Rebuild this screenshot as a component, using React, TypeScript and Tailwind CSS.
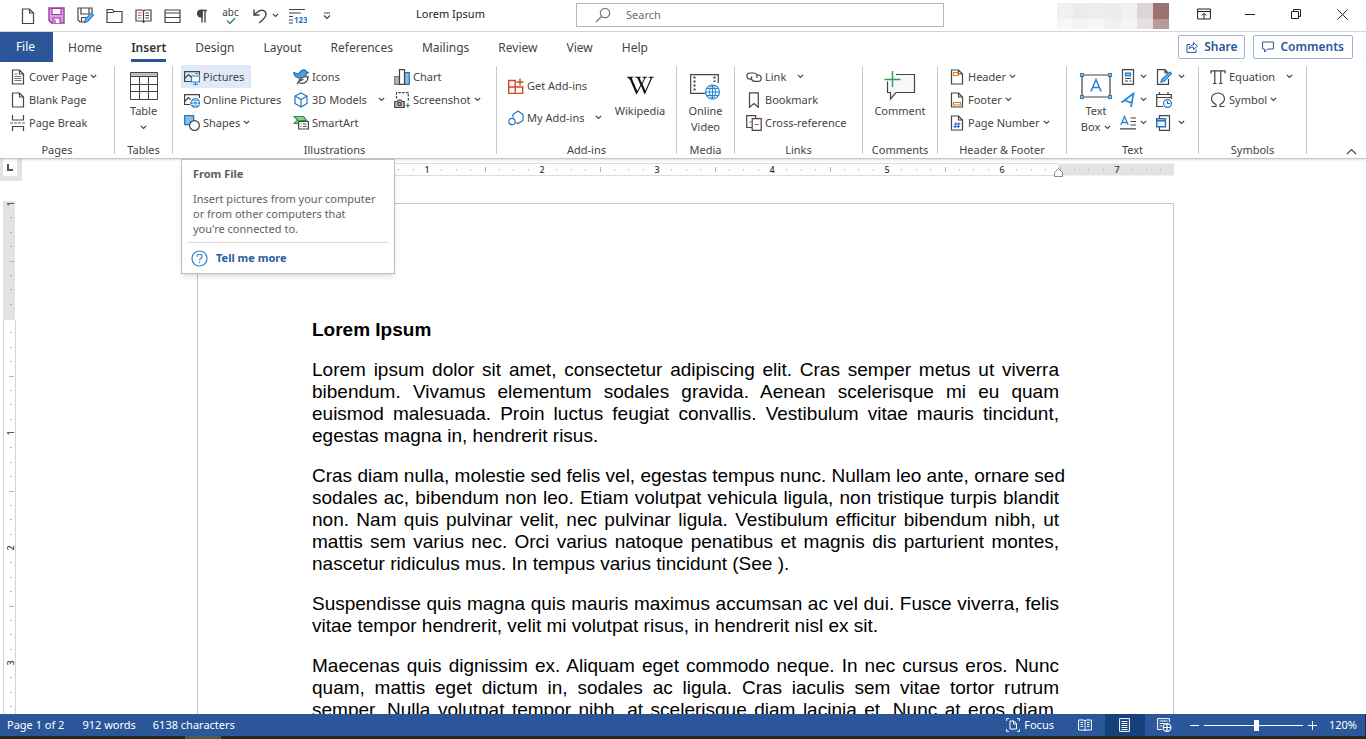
import type { ReactNode } from "react";
import { FaWikipediaW } from "react-icons/fa";

const INK = "#444";
const BLUE = "#2372ba";

function Svg({ w = 16, h = 16, className = "", children }: { w?: number; h?: number; className?: string; children: ReactNode }) {
  return (
    <svg width={w} height={h} viewBox={`0 0 ${w} ${h}`} fill="none" stroke={INK} strokeWidth="1.2" className={`shrink-0 ${className}`} aria-hidden="true">
      {children}
    </svg>
  );
}

function Chevron() {
  return (
    <Svg w={7} h={5}>
      <path d="M.8.8 3.5 3.5 6.2.8" />
    </Svg>
  );
}

const pagePath = "M2.5 1h7l4 4v10h-11zM9.5 1v4h4";

const icons = {
  newDoc: (<Svg><path d="M2.5 1h7l4 4v10.500h-11zM9.500 1v4h4" /></Svg>),
  save: (
    <Svg w={17} h={17}>
      <path d="M1 1h15v15H3.500L1 13.500z" stroke="#a03aa5" fill="#dfa0e2" strokeWidth="1.400" />
      <path d="M4 1.500h9v6H4zM5 16v-5h7v5" stroke="#a03aa5" fill="#fff" />
      <path d="M7 12.500V16" stroke="#a03aa5" />
    </Svg>
  ),
  saveAs: (
    <Svg w={17} h={17}>
      <path d="M8 15H3l-2-2V1h14v5M4 1v6h8V1M4.500 15v-4.500h5" />
      <path d="m7.500 15.500 1-3.500 6-6 2 2-6 6.500z" fill="#7dbdf0" stroke="#1f77c9" />
    </Svg>
  ),
  folder: (<Svg w={17}><path d="M1 14.500V1.500h5.500l1.500 2h8v11zM1 4.500h6l1-1" /></Svg>),
  book: (
    <Svg w={17}>
      <path d="M1 2h6l1.500 1L10 2h6v11h-6l-1.500 1L7 13H1zM8.500 3v12M10.500 5H14M10.500 7.500H14M10.500 10H14" />
      <path d="M3 5h3.500M3 7.500h3.500M3 10h3.500" stroke="#d0643f" />
    </Svg>
  ),
  card: (<Svg w={17}><path d="M1 2h15v12.500H1zM1 5h15M1 9.500h15" /></Svg>),
  undo: (<Svg><path d="M2 1.500v5.500h5.500M2 7l3.500-3C9 1 14 2 14 6.500c0 3-3 5-7 8.500" strokeWidth="1.400" /></Svg>),
  cover: (<Svg><path d={pagePath} /><path d="M4.500 5h3M4.500 7.500h7M4.500 9.500h7M4.500 11.500h7" stroke="#777" /></Svg>),
  blank: (<Svg><path d={pagePath} /></Svg>),
  pageBreak: (
    <Svg>
      <path d="M2.500 0v5h11V0M2.500 16v-4.500h11V16" />
      <path d="M0 8h16" stroke={BLUE} strokeDasharray="3 1" />
    </Svg>
  ),
  table: (
    <Svg w={28} h={28}>
      <path d="M1 1h26v4H1z" fill="#bdbdbd" stroke="none" />
      <path d="M.5.5h27v27H.5zM1 4.500h26M1 12.500h26M1 19.500h26M9.500 5v22M18.500 5v22" strokeWidth="1" />
    </Svg>
  ),
  pictures: (
    <Svg>
      <path d="M7 12.500H.6V2.600h14.800V6M.6 9.500 4.500 5.500 7 8M11.500 4.500h2" />
      <path d="M7.500 7h8v6h-8zM9 15.500h5M11.500 13v2.500" fill="#fff" stroke="#2b84cf" />
    </Svg>
  ),
  online: (
    <Svg>
      <path d="M6 12.500H.6V2.600h14.800V6M.6 9.500 4.500 5.500 6.500 7.500" />
      <circle cx="11.300" cy="11" r="4.500" fill="#4ea5e4" stroke="#1b75bc" strokeWidth="1" />
      <path d="M7 9.500h8.600M7 12.500h8.600M11.300 6.500c-3 3-3 6 0 9 3-3 3-6 0-9" stroke="#fff" strokeWidth=".7" />
    </Svg>
  ),
  shapes: (
    <Svg>
      <path d="M.7.7h9v9h-9z" fill="#83beec" stroke={BLUE} />
      <circle cx="10.500" cy="10.500" r="4.900" fill="#fff" />
    </Svg>
  ),
  bird: (
    <Svg>
      <path d="M.7 3.500 5 5C7 5 7 .8 10.500.8c2 0 2.500 1 3 2l1.800.7-2 1.200c0 3-2.300 4.500-5.300 4.500C4 9.200 1.200 7 .7 3.500z" fill="#4d9fdc" stroke="#1b6fb5" />
      <path d="M4 15.300c1-2.500 4-4.500 6.500-5M6 13.500C5.500 9.500 9 8 15 7.500c0 5.500-4 8.500-9 6z" fill="#fff" />
    </Svg>
  ),
  cube: (
    <Svg>
      <path d="M8 1l6 3v7.500L8 15l-6-3.500V4z" stroke={BLUE} />
      <path d="M2 4l6 3.500L14 4M8 7.500V15" stroke={BLUE} />
    </Svg>
  ),
  smartArt: (
    <Svg>
      <path d="M1 1.500h9.500l3 4H6v3H1l3.500-3.500z" fill="#8ccf9a" stroke="#2f8f46" />
      <path d="M5.600 6.500h9.800v7.500H5.600z" fill="#fff" />
      <path d="M7.500 9h1M10 9h3.500M7.500 11.500h1M10 11.500h3.500" />
    </Svg>
  ),
  chart: (
    <Svg>
      <path d="M.7 7.500h4.600v7.800H.7z" fill="#bbb" stroke="#777" />
      <path d="M10.500 3.700h4.800v11.600h-4.800z" fill="#83beec" stroke={BLUE} />
      <path d="M5.500.7h5v14.600h-5z" fill="#fff" />
    </Svg>
  ),
  screenshot: (
    <Svg>
      <path d="M2.500 6.500V.7h11.800v8" strokeDasharray="2.500 1.300" />
      <path d="M.7 9.500h2.500l1-1.500h3l1 1.500h2v6H.7z" fill="#bbb" />
      <circle cx="5.500" cy="12" r="1.700" />
      <path d="M11.500 13.500h4.500M13.800 11.300v4.500" stroke="#2f8f46" />
    </Svg>
  ),
  addins: (
    <Svg>
      <path d="M.7 2.500h6.500v13H.7zM.7 9h14v6.500H7.200V9M12 .5v7M8.500 4h7" stroke="#d24726" strokeWidth="1.400" />
    </Svg>
  ),
  myAddins: (
    <Svg>
      <path d="M5 7.500V4.500L10 1l5 3.500v6L10 13.500l-2-1" stroke={BLUE} />
      <circle cx="4" cy="11.500" r="3.200" stroke={BLUE} />
    </Svg>
  ),
  video: (
    <Svg w={32} h={28}>
      <path d="M16 21.400H1.700V2.600h27.600V11" />
      <path d="M5.500 4.500v16M25.500 4.500V10" strokeWidth="2" strokeDasharray="2 2" />
      <circle cx="23.500" cy="20" r="6.900" fill="#fff" stroke="#2b84cf" />
      <path d="M16.600 20h13.800M17.800 16.500h11.400M17.800 23.500h11.400M23.500 13v14M23.500 13c-4 4-4 10 0 14 4-4 4-10 0-14" stroke="#2b84cf" strokeWidth="1" />
    </Svg>
  ),
  link: (
    <Svg>
      <path d="M6 10.200H4A3.100 3.100 0 0 1 4 4h4a3.100 3.100 0 0 1 2.600 4.800" />
      <path d="M10.800 6H12a3.100 3.100 0 0 1 0 6.300H8.500A3.100 3.100 0 0 1 6 7.400" />
    </Svg>
  ),
  bookmark: (<Svg><path d="M3.500.8h8.800v14.500L8 11.500l-4.500 3.800z" /></Svg>),
  crossRef: (
    <Svg>
      <path d="M6 12.500H.7V.7h9V3" />
      <path d="M6.200 3.700h9v11.600h-9z" fill="#fff" />
      <path d="M3 7h2.500M9 9.500h3.500" stroke="#d0433f" />
    </Svg>
  ),
  comment: (
    <Svg w={32} h={30}>
      <path d="M12 3.500h18.500v18H12L6.500 28v-6.500h-3v-11" fill="#f8f8f8" />
      <path d="M8.500 0v16M.5 8.500h16" stroke="#2fa35a" strokeWidth="1.500" />
    </Svg>
  ),
  header: (<Svg><path d={pagePath} /><path d="M4.500 3.500h4.500v3H4.500z" stroke="#e07b1f" /></Svg>),
  footer: (<Svg><path d={pagePath} /><path d="M4.500 10.500h7V13h-7z" stroke="#e07b1f" /></Svg>),
  pageNo: (<Svg><path d={pagePath} /><path d="M7 7.500 6 13M10 7.500 9 13M5 9h6.500M4.500 11.500H11" stroke={BLUE} /></Svg>),
  textBox: (
    <Svg w={32} h={26}>
      <path d="M2 2h28v22H2z" />
      <path d="M11 18.500 16 6.500l5 12M12.800 14.500h6.400" stroke="#2b84cf" strokeWidth="1.600" />
      <path d="M.7.7h2.600v2.600H.7zM28.700.7h2.600v2.600h-2.600zM.7 22.700h2.600v2.600H.7zM28.700 22.700h2.600v2.600h-2.600z" fill="#fff" stroke={BLUE} />
    </Svg>
  ),
  quickParts: (
    <Svg>
      <path d="M2.500.7h11v14.600h-11z" />
      <path d="M5.500 4h5v3h-5z" fill="#83beec" stroke={BLUE} />
      <path d="M5 9.500h6M5 12h3M9.500 12h2" />
    </Svg>
  ),
  wordArt: (<Svg><path d="M1.500 10.500 13.500 1.500 11 15M5 8.500l7 2.500" stroke="#2b84cf" strokeWidth="1.700" /></Svg>),
  dropCap: (
    <Svg>
      <path d="M.8 10 4.500 1.500 8.200 10M2 7.500h5" stroke="#2b84cf" strokeWidth="1.300" />
      <path d="M10.500 3H16M10.500 6.500H16M10.500 10H16M0 13.800h16" />
    </Svg>
  ),
  signature: (
    <Svg>
      <path d="M10.500 15.300H1.500V.7H9L12 4M9 .7V4h3M12.500 10v5.300h-3" />
      <path d="m5 13 1-3 8-7 1.500 1.500-7 7.500z" fill="#83beec" stroke="#1f77c9" />
    </Svg>
  ),
  date: (
    <Svg>
      <path d="M7 14.500H.7v-12h14.600V7M.7 5.500h14.600M3.500 0v2.500M12 0v2.500" />
      <circle cx="11.500" cy="11.500" r="3.900" fill="#fff" stroke={BLUE} />
      <path d="M11.500 9v2.500h2.500" stroke={BLUE} />
    </Svg>
  ),
  object: (
    <Svg>
      <path d="M3.500 3V.7h10v14.600h-10V12" />
      <path d="M.7 3.700h8.800v8H.7zM.7 5.700h8.800" fill="#e9f3fc" stroke={BLUE} strokeWidth="1.400" />
    </Svg>
  ),
  pi: (<Svg><path d="M1 4.500V1.800h14v2.700M4.800 2v12.500M10.800 2v12.500M3 14.500h3.500M9 14.500h3.500" /></Svg>),
  omega: (<Svg><path d="M1.500 14.500H6v-2C3 11 1.500 9 1.500 6.800 1.500 3.500 4.200 1 8 1s6.500 2.500 6.500 5.800C14.500 9 13 11 10 12.500v2h4.500" /></Svg>),
};

function Row({ icon, label, chevron, far, highlight }: { icon: ReactNode; label: string; chevron?: boolean; far?: boolean; highlight?: boolean }) {
  return (
    <button type="button" className={`flex h-[23px] items-center gap-[3px] px-[3px] pr-[7px] whitespace-nowrap ${highlight ? "bg-[#dfe9f8]" : ""}`}>
      {icon}
      <span className={`pt-px ${far ? "mr-2" : ""}`}>{label}</span>
      {chevron && <Chevron />}
    </button>
  );
}

function Big({ icon, lines, chevron, className = "" }: { icon: ReactNode; lines: string[]; chevron?: "inline" | "below"; className?: string }) {
  return (
    <button type="button" className={`flex flex-col items-center pt-[3px] leading-4 ${className}`}>
      <span className="flex h-[35px] items-center">{icon}</span>
      {lines.map((line, i) => (
        <span key={line} className="flex items-center gap-1 whitespace-nowrap">
          {line}
          {chevron === "inline" && i === lines.length - 1 && <Chevron />}
        </span>
      ))}
      {chevron === "below" && <span className="flex h-4 items-center"><Chevron /></span>}
    </button>
  );
}

function Tiny({ icon, name, gap, chevron = true }: { icon: ReactNode; name: string; gap: string; chevron?: boolean }) {
  return (
    <button type="button" aria-label={name} className={`flex h-[23px] items-center px-[3px] ${gap}`}>
      {icon}
      {chevron && <Chevron />}
    </button>
  );
}

function Group({ name, width, className = "", children }: { name: string; width: string; className?: string; children: ReactNode }) {
  return (
    <section aria-label={name} className={`flex shrink-0 ${width}`}>
      <div className="flex min-w-0 flex-1 flex-col">
        <div className={`flex h-[77px] items-start ${className}`}>{children}</div>
        <div className="text-center leading-4">{name}</div>
      </div>
      <div className="mt-px mb-1 w-px bg-[#c8c8c8]" />
    </section>
  );
}

const tabs = ["Home", "Insert", "Design", "Layout", "References", "Mailings", "Review", "View", "Help"];

function QuickButton({ name, children }: { name: string; children: ReactNode }) {
  return (
    <button type="button" aria-label={name} className="flex h-[31px] w-[29px] shrink-0 items-center justify-center">
      {children}
    </button>
  );
}

const mosaic = [
  ["bg-[#f0f0f0]", "bg-[#ebebeb]", "bg-[#ededed]", "bg-[#ebebeb]", "bg-[#f0f0f0]", "bg-[#ddd4d5]", "bg-[#9d7170]"],
  ["bg-[#f7f7f7]", "bg-[#f3f3f3]", "bg-[#f7f7f7]", "bg-[#f1f1f1]", "bg-[#f6f6f6]", "bg-[#e8dfe0]", "bg-[#b79b9b]"],
];

function WindowButton({ name, children }: { name: string; children: ReactNode }) {
  return (
    <button type="button" aria-label={name} className="flex h-7 w-[46px] items-center justify-center">
      {children}
    </button>
  );
}

function TitleBar() {
  return (
    <header className="grid h-8 grid-cols-[416px_160px_368px_1fr] items-center border-b border-[#d4d4d4]">
      <div className="flex pl-[13px]">
        <QuickButton name="New">{icons.newDoc}</QuickButton>
        <QuickButton name="Save">{icons.save}</QuickButton>
        <QuickButton name="Save As">{icons.saveAs}</QuickButton>
        <QuickButton name="Open">{icons.folder}</QuickButton>
        <QuickButton name="Read Mode">{icons.book}</QuickButton>
        <QuickButton name="Form">{icons.card}</QuickButton>
        <QuickButton name="Show paragraph marks">
          <Svg w={12}>
            <path d="M6 2.500v12M9 2.500v12M5 2.500h6" strokeWidth="1.400" />
            <path d="M6 2H5a3.500 3.500 0 0 0 0 7h1z" fill={INK} />
          </Svg>
        </QuickButton>
        <QuickButton name="Spelling">
          <span className="flex flex-col items-center pt-px text-[10px] leading-[9px]">
            abc
            <Svg w={10} h={8}><path d="m1 3.500 3 3L9 1" stroke="#2f8f46" strokeWidth="1.400" /></Svg>
          </span>
        </QuickButton>
        <button type="button" aria-label="Undo" className="flex h-[31px] w-[38px] items-center gap-1 pl-[7px]">
          {icons.undo}
          <Chevron />
        </button>
        <QuickButton name="Line numbers">
          <Svg w={18}>
            <path d="M0 1.500h16M0 5h12M0 8.500h4M0 12h4M0 15h4" />
            <text x="5" y="15" fontSize="8" fontWeight="700" fill="#1f77c9" stroke="none">123</text>
          </Svg>
        </QuickButton>
        <QuickButton name="Customize">
          <Svg w={8} h={8}><path d="M1 1h6M1 3.500l3 3 3-3" /></Svg>
        </QuickButton>
      </div>
      <h1 className="pb-[3px] text-[11px] leading-4 text-[#222]">Lorem Ipsum</h1>
      <label className="mb-px flex h-6 items-center border border-[#b5b5b5] pl-[18px]">
        <Svg className="mr-[15px]">
          <circle cx="10" cy="6" r="4.700" stroke="#777" />
          <path d="M6.500 9.500 1 15" stroke="#777" />
        </Svg>
        <input type="text" aria-label="Search" placeholder="Search" className="min-w-0 flex-1 text-[11px] outline-none placeholder:text-[#707070]" />
      </label>
      <div className="flex h-full items-start justify-end pr-px">
        <div className="mt-[3px] mr-[12px] w-[112px]">
          {mosaic.map((row, i) => (
            <div key={i} className="flex">
              {row.map((color, j) => (
                <span key={j} className={`w-4 ${i === 0 ? "h-4" : "h-[10px]"} ${color}`} />
              ))}
            </div>
          ))}
        </div>
        <WindowButton name="Ribbon display options">
          <Svg w={14} h={12}><path d="M.6 1h12.800v10H.6zM.6 3.500h12.800M7 11V5.500M4.800 7.500 7 5.300l2.200 2.200" stroke="#222" strokeWidth="1" /></Svg>
        </WindowButton>
        <WindowButton name="Minimize">
          <Svg w={10} h={10}><path d="M0 5.500h10" stroke="#222" strokeWidth="1" /></Svg>
        </WindowButton>
        <WindowButton name="Restore">
          <Svg w={10} h={10}><path d="M.5 2.500h7v7h-7zM2.500 2.500v-2h7v7h-2" stroke="#222" strokeWidth="1" /></Svg>
        </WindowButton>
        <WindowButton name="Close">
          <Svg w={11} h={11}><path d="m.5.5 10 10M10.500.5l-10 10" stroke="#222" strokeWidth="1" /></Svg>
        </WindowButton>
      </div>
    </header>
  );
}

function TabBar() {
  return (
    <nav className="flex h-[30px] items-center gap-px text-xs">
      <button type="button" className="h-full w-[53px] bg-[#2b579a] pr-0.5 text-white">File</button>
      {tabs.map((tab) => (
        <button
          key={tab}
          type="button"
          className={`h-full px-[14px] ${tab === "Insert" ? "font-semibold text-[#333]" : ""}`}
        >
          <span className={`block border-b-[3px] pt-1 leading-[22px] ${tab === "Insert" ? "border-[#2b579a]" : "border-transparent"}`}>{tab}</span>
        </button>
      ))}
      <div className="mr-[13px] ml-auto flex gap-2 font-semibold text-[#2b579a]">
        <button type="button" className="flex h-6 items-center gap-1.5 rounded-xs border border-[#9db3d6] px-[7px]">
          <Svg w={12} h={12}>
            <path d="M4 3.500H1v7.900h9V8.500" stroke="#2b579a" strokeWidth="1" />
            <path d="M3 8c.5-3 2-4 4.500-4V1.500l4 3.700-4 3.300V6.200C5.500 6 4.200 6.500 3 8z" stroke="#2b579a" strokeWidth="1" />
          </Svg>
          Share
        </button>
        <button type="button" className="flex h-6 items-center gap-1.5 rounded-xs border border-[#9db3d6] px-2">
          <Svg w={12} h={12}><path d="M.6 1h10.800v7H5.500L2.600 11V8h-2z" stroke="#2b579a" strokeWidth="1" /></Svg>
          Comments
        </button>
      </div>
    </nav>
  );
}

function PictureTip() {
  return (
    <div role="tooltip" className="absolute top-[94px] left-0 z-10 w-[214px] border border-[#bebebe] bg-white px-[5px] text-[#5f5f5f] shadow-md">
      <div className="px-[6px] pt-[6px] pb-[6px] leading-[15px]">
        <p className="font-bold">From File</p>
        <p className="mt-[10px]">
          Insert pictures from your computer or from other computers that
          <br />
          you're connected to.
        </p>
      </div>
      <a href="#help" className="flex h-[31px] items-center gap-2 border-t border-[#dcdcdc] pl-[4px] font-bold text-[#2b6099]">
        <Svg w={17} h={17}>
          <circle cx="8.500" cy="8.500" r="7.500" stroke="#2b84cf" />
          <path d="M6 6.800C6 3.400 11 3.500 11 6.500c0 2-2.500 1.900-2.500 4M8.500 11.800v1.400" stroke="#2b84cf" />
        </Svg>
        Tell me more
      </a>
    </div>
  );
}

function Ribbon() {
  return (
    <div className="relative z-10 flex h-[97px] border-b border-[#c6c6c6] bg-white pt-[3px] shadow-sm">
      <Group name="Pages" width="w-[115px]" className="flex-col pl-[7px]">
        <Row icon={icons.cover} label="Cover Page" chevron />
        <Row icon={icons.blank} label="Blank Page" />
        <Row icon={icons.pageBreak} label="Page Break" />
      </Group>
      <Group name="Tables" width="w-[58px]" className="justify-center">
        <Big icon={icons.table} lines={["Table"]} chevron="below" />
      </Group>
      <Group name="Illustrations" width="w-[324px]" className="pl-2">
        <div className="relative flex w-[109px] flex-col items-start">
          <Row icon={icons.pictures} label="Pictures" highlight />
          <Row icon={icons.online} label="Online Pictures" />
          <Row icon={icons.shapes} label="Shapes" chevron />
          <PictureTip />
        </div>
        <div className="flex w-[101px] flex-col items-start">
          <Row icon={icons.bird} label="Icons" />
          <Row icon={icons.cube} label="3D Models" chevron far />
          <Row icon={icons.smartArt} label="SmartArt" />
        </div>
        <div className="flex flex-col items-start">
          <Row icon={icons.chart} label="Chart" />
          <Row icon={icons.screenshot} label="Screenshot" chevron />
        </div>
      </Group>
      <Group name="Add-ins" width="w-[180px]" className="pl-2">
        <div className="flex w-[103px] flex-col items-start gap-[9px] pt-[9px]">
          <Row icon={icons.addins} label="Get Add-ins" />
          <Row icon={icons.myAddins} label="My Add-ins" chevron far />
        </div>
        <Big icon={<FaWikipediaW size={27} color="#111" />} lines={["Wikipedia"]} className="w-16" />
      </Group>
      <Group name="Media" width="w-[58px]" className="justify-center">
        <Big icon={icons.video} lines={["Online", "Video"]} />
      </Group>
      <Group name="Links" width="w-[128px]" className="flex-col pl-2">
        <Row icon={icons.link} label="Link" chevron far />
        <Row icon={icons.bookmark} label="Bookmark" />
        <Row icon={icons.crossRef} label="Cross-reference" />
      </Group>
      <Group name="Comments" width="w-[75px]" className="justify-center">
        <Big icon={icons.comment} lines={["Comment"]} />
      </Group>
      <Group name="Header & Footer" width="w-[129px]" className="flex-col pl-2">
        <Row icon={icons.header} label="Header" chevron />
        <Row icon={icons.footer} label="Footer" chevron />
        <Row icon={icons.pageNo} label="Page Number" chevron />
      </Group>
      <Group name="Text" width="w-[132px]" className="pl-2">
        <Big icon={icons.textBox} lines={["Text", "Box"]} chevron="inline" className="w-[42px]" />
        <div className="flex w-9 flex-col items-start">
          <Tiny icon={icons.quickParts} name="Quick Parts" gap="gap-1" />
          <Tiny icon={icons.wordArt} name="WordArt" gap="gap-1" />
          <Tiny icon={icons.dropCap} name="Drop Cap" gap="gap-1" />
        </div>
        <div className="flex flex-col items-start">
          <Tiny icon={icons.signature} name="Signature Line" gap="gap-1.5" />
          <Tiny icon={icons.date} name="Date and Time" gap="gap-1.5" chevron={false} />
          <Tiny icon={icons.object} name="Object" gap="gap-1.5" />
        </div>
      </Group>
      <Group name="Symbols" width="w-[108px]" className="flex-col pl-2">
        <Row icon={icons.pi} label="Equation" chevron far />
        <Row icon={icons.omega} label="Symbol" chevron />
      </Group>
      <button type="button" aria-label="Collapse the ribbon" className="mr-[9px] mb-[3px] ml-auto self-end">
        <Svg w={11} h={7}><path d="m1 6 4.500-4.500L10 6" /></Svg>
      </button>
    </div>
  );
}

const INCH = 115;

function HorizontalRuler() {
  const ticks = Array.from({ length: 68 }, (_, i) => i - 7);
  return (
    <svg width="977" height="20" className="block" aria-hidden="true">
      <path d="M0 4.500h977v12H0z" fill="#e3e3e3" />
      <path d="M115 4.500h746v12H115z" fill="#fff" />
      <path d="M115 4.500h746M115 16.500h746" stroke="#ddd" />
      {ticks.map((t) => {
        const x = Math.round(115 + (t * INCH) / 8);
        if (x > 970 || x < 2) return null;
        if (t % 8 === 0)
          return t === 0 ? null : (
            <text key={t} x={x} y="14" fontSize="9" fontWeight="500" textAnchor="middle" fill="#333">{Math.abs(t / 8)}</text>
          );
        return <path key={t} d={t % 4 === 0 ? `M${x}.5 8v5` : `M${x}.5 10v1.500`} stroke="#b5b5b5" />;
      })}
      <path d="M857.500 17.500v-4l4-4 4 4v4z" fill="#fff" stroke="#888" />
    </svg>
  );
}

function VerticalRuler() {
  const ticks = Array.from({ length: 38 }, (_, i) => i - 7).filter((t) => t !== 0 && t < 28);
  return (
    <svg width="22" height="513" className="mt-5 block" aria-hidden="true">
      <path d="M3 0h12v119H3z" fill="#e3e3e3" />
      <path d="M3.500 119v394M15.500 119v394" stroke="#d4d4d4" />
      <text transform="translate(14 3) rotate(-90)" fontSize="9" fontWeight="500" textAnchor="middle" fill="#333">1</text>
      {ticks.map((t) => {
        const y = Math.round(117 + (t * INCH) / 8);
        if (t % 8 === 0)
          return (
            <text key={t} transform={`translate(14 ${y}) rotate(-90)`} fontSize="9" fontWeight="500" textAnchor="middle" fill="#333">{t / 8}</text>
          );
        return <path key={t} d={t % 4 === 0 ? `M9 ${y}.5h5` : `M10 ${y}.5h2`} stroke="#b5b5b5" />;
      })}
    </svg>
  );
}

const crasLines = [
  "Cras diam nulla, molestie sed felis vel, egestas tempus nunc. Nullam leo ante, ornare sed",
  "sodales ac, bibendum non leo. Etiam volutpat vehicula ligula, non tristique turpis blandit",
  "non. Nam quis pulvinar velit, nec pulvinar ligula. Vestibulum efficitur bibendum nibh, ut",
  "mattis sem varius nec. Orci varius natoque penatibus et magnis dis parturient montes,",
];

function Document() {
  return (
    <main className="flex min-h-0 flex-1 overflow-hidden bg-white">
      <div className="w-[22px] shrink-0">
        <button type="button" aria-label="Tab selector" className="flex h-[22px] w-full items-center justify-center border-r-[5px] border-b-[5px] border-l-[3px] border-[#e3e3e3] bg-white">
          <Svg w={7} h={7}><path d="M1 0v6h5" stroke="#555" strokeWidth="2" /></Svg>
        </button>
        <VerticalRuler />
      </div>
      <div className="flex flex-1 justify-center pr-[17px]">
        <div className="w-[977px] shrink-0">
          <HorizontalRuler />
          <article className="mt-6 flex min-h-full flex-col gap-[18px] border border-[#c6c6c6] px-[114px] pt-[115px] text-justify font-['Liberation_Sans',Arial,sans-serif] text-[19px] leading-[22px] text-black">
            <h2 className="font-bold">Lorem Ipsum</h2>
            <p>Lorem ipsum dolor sit amet, consectetur adipiscing elit. Cras semper metus ut viverra bibendum. Vivamus elementum sodales gravida. Aenean scelerisque mi eu quam euismod malesuada. Proin luctus feugiat convallis. Vestibulum vitae mauris tincidunt, egestas magna in, hendrerit risus.</p>
            <p>
              {crasLines.map((line) => (
                <span key={line} className="block whitespace-nowrap [text-align-last:justify]">{line}</span>
              ))}
              nascetur ridiculus mus. In tempus varius tincidunt (See ).
            </p>
            <p>Suspendisse quis magna quis mauris maximus accumsan ac vel dui. Fusce viverra, felis vitae tempor hendrerit, velit mi volutpat risus, in hendrerit nisl ex sit.</p>
            <p className="[text-align-last:justify]">Maecenas quis dignissim ex. Aliquam eget commodo neque. In nec cursus eros. Nunc quam, mattis eget dictum in, sodales ac ligula. Cras iaculis sem vitae tortor rutrum semper. Nulla volutpat tempor nibh, at scelerisque diam lacinia et. Nunc at eros diam,</p>
          </article>
        </div>
      </div>
    </main>
  );
}

function StatusBar() {
  return (
    <footer className="shrink-0 bg-[#2a2627]">
      <div className="mr-px flex h-[22px] items-center bg-[#2b579a] pl-[7px] text-white">
        <span className="mr-[18px]">Page 1 of 2</span>
        <span className="mr-[17px]">912 words</span>
        <span>6138 characters</span>
        <button type="button" className="ml-auto flex items-center gap-1">
          <Svg w={14} h={14}>
            <path d="M3 .6H.6V3M11 .6h2.400V3M3 13.400H.6V11M11 13.400h2.400V11M4 3h4l2.500 2.500V11H4zM7.500 3v3h3" stroke="#fff" strokeWidth="1" />
          </Svg>
          Focus
        </button>
        <div className="ml-[11px] flex h-full">
          <button type="button" aria-label="Read Mode" className="flex w-10 items-center justify-center">
            <Svg w={14} h={13}><path d="M.6 1H6l1 1 1-1h5.400v10H8l-1 1-1-1H.6zM7 2v10M2.500 3.500H5M2.500 5.500H5M2.500 7.500H5M9 3.500h2.500M9 5.500h2.500M9 7.500h2.500" stroke="#fff" strokeWidth="1" /></Svg>
          </button>
          <button type="button" aria-label="Print Layout" className="flex w-10 items-center justify-center bg-[#164079]">
            <Svg w={11} h={14}><path d="M.6.6h9.800v12.800H.6zM2.500 3.500h6M2.500 5.500h6M2.500 7.500h6M2.500 9.500h6M2.500 11.500h6" stroke="#fff" strokeWidth="1" /></Svg>
          </button>
          <button type="button" aria-label="Web Layout" className="flex w-10 items-center justify-center">
            <Svg w={15} h={14}>
              <path d="M5 11.500H.6V.6h11.800V4M2.500 3h8M2.500 5.500h5M2.500 8H5" stroke="#fff" strokeWidth="1" />
              <circle cx="10" cy="9.500" r="3.900" fill="#2b579a" stroke="#fff" />
              <path d="M6 9.500h8M10 5.500v8" stroke="#fff" />
            </Svg>
          </button>
        </div>
        <button type="button" aria-label="Zoom out" className="ml-[5px] flex w-[14px] items-center"><Svg w={9} h={9}><path d="M0 4.500h9" stroke="#fff" strokeWidth="1" /></Svg></button>
        <input
          type="range"
          aria-label="Zoom"
          min={0}
          max={100}
          defaultValue={53}
          className="h-[11px] w-[99px] appearance-none bg-transparent bg-[linear-gradient(#fff,#fff)] bg-[length:100%_1px] bg-center bg-no-repeat [&::-webkit-slider-thumb]:h-[11px] [&::-webkit-slider-thumb]:w-[5px] [&::-webkit-slider-thumb]:appearance-none [&::-webkit-slider-thumb]:bg-white"
        />
        <button type="button" aria-label="Zoom in" className="ml-[5px]"><Svg w={9} h={9}><path d="M0 4.500h9M4.500 0v9" stroke="#fff" strokeWidth="1" /></Svg></button>
        <span className="mr-[8px] ml-3">120%</span>
      </div>
      <div className="ml-[185px] h-[3px] w-9 bg-[#555]" />
    </footer>
  );
}

export default function App() {
  return (
    <div className="flex h-screen flex-col overflow-hidden bg-white font-['Noto_Sans',sans-serif] text-[11px] text-[#444]">
      <TitleBar />
      <TabBar />
      <Ribbon />
      <Document />
      <StatusBar />
    </div>
  );
}
